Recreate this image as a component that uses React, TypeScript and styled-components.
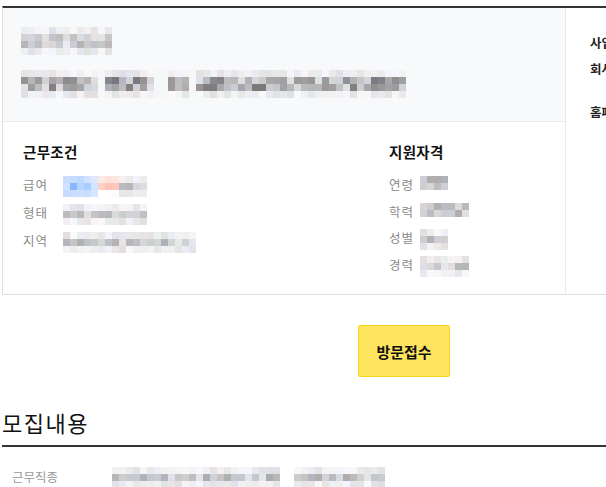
import React from "react";
import styled, { createGlobalStyle } from "styled-components";

const Global = createGlobalStyle`
  html, body { margin: 0; padding: 0; overflow: hidden; background: #fff; }
  body { font-family: "Noto Sans CJK KR", "Noto Sans", sans-serif; color: #222; }
`;

function rng(seed: number) {
  let a = seed >>> 0;
  return () => {
    a = (a + 0x6d2b79f5) >>> 0;
    let t = a;
    t = Math.imul(t ^ (t >>> 15), t | 1);
    t ^= t + Math.imul(t ^ (t >>> 7), t | 61);
    return ((t ^ (t >>> 14)) >>> 0) / 4294967296;
  };
}

const MosaicGrid = styled.div<{ $cols: number; $cell: number }>`
  display: grid;
  grid-template-columns: repeat(${(p) => p.$cols}, ${(p) => p.$cell}px);
  grid-auto-rows: ${(p) => p.$cell}px;
  flex-shrink: 0;
`;

const Cell = styled.span<{ $c: string }>`
  display: block;
  background: ${(p) => p.$c};
`;

type MosaicProps = {
  cols: number;
  rows: number;
  seed: number;
  tint?: (col: number, row: number) => string | null;
  cell?: number;
  light?: boolean;
};

function Mosaic({ cols, rows, seed, tint, cell = 7, light }: MosaicProps) {
  const r = rng(seed);
  const cells: string[] = [];
  for (let y = 0; y < rows; y++) {
    for (let x = 0; x < cols; x++) {
      const t = tint ? tint(x, y) : null;
      if (t) {
        cells.push(t);
        continue;
      }
      const edge = rows >= 3 && (y === 0 || y === rows - 1);
      const lo = edge ? 222 : light ? 175 : rows >= 4 ? 120 : 170;
      const hi = edge ? 248 : light ? 235 : rows >= 4 ? 225 : 232;
      const v = Math.round(lo + r() * (hi - lo));
      const hue = r();
      const rr = v + (hue < 0.33 ? 4 : 0);
      const gg = v + (hue > 0.66 ? 3 : 0);
      const bb = v + (hue > 0.33 && hue < 0.66 ? 8 : 2);
      cells.push(`rgb(${Math.min(rr, 255)},${Math.min(gg, 255)},${Math.min(bb, 255)})`);
    }
  }
  return (
    <MosaicGrid $cols={cols} $cell={cell}>
      {cells.map((c, i) => (
        <Cell key={i} $c={c} />
      ))}
    </MosaicGrid>
  );
}

const Page = styled.div`
  width: 804px;
  padding: 6px 0 0 2px;
`;

const Card = styled.section`
  display: grid;
  grid-template-columns: 563px 1fr;
  border-top: 2px solid #333;
  border-left: 1px solid #e0e0e0;
  border-bottom: 1px solid #e0e0e0;
`;

const Main = styled.div`
  border-right: 1px solid #eaeaea;
  display: flex;
  flex-direction: column;
`;

const Header = styled.div`
  background: #f8f9fa;
  height: 114px;
  box-sizing: border-box;
  border-bottom: 1px solid #ececec;
  padding: 19px 0 0 18px;
  display: flex;
  flex-direction: column;
  gap: 15px;
`;

const Body = styled.div`
  display: grid;
  grid-template-columns: 1fr 176px;
  padding: 19px 0 0 20px;
  height: 172px;
  box-sizing: border-box;
`;

const Col = styled.div`
  display: flex;
  flex-direction: column;
`;

const ColTitle = styled.h3`
  margin: 0 0 13px;
  font-size: 14.5px;
  line-height: 22px;
  font-weight: 700;
  color: #111;
  letter-spacing: 0.3px;
`;

const InfoRow = styled.div<{ $gap: number }>`
  display: flex;
  align-items: flex-start;
  height: ${(p) => p.$gap}px;
`;

const Label = styled.span<{ $w: number }>`
  width: ${(p) => p.$w}px;
  font-size: 12.5px;
  line-height: 17px;
  color: #8a8a8a;
  letter-spacing: 1px;
  flex-shrink: 0;
`;

const Side = styled.aside`
  padding: 26px 0 0 24px;
  display: flex;
  flex-direction: column;
`;

const SideItem = styled.div<{ $mt: number }>`
  margin-top: ${(p) => p.$mt}px;
  font-size: 12.5px;
  line-height: 18px;
  font-weight: 700;
  color: #222;
  white-space: nowrap;
`;

const ButtonWrap = styled.div`
  display: flex;
  justify-content: center;
  margin-top: 30px;
`;

const VisitButton = styled.button`
  width: 92px;
  height: 52px;
  background: #ffe55f;
  border: 1px solid #f9d21c;
  border-radius: 2px;
  font-family: inherit;
  font-size: 15px;
  font-weight: 700;
  color: #111;
  cursor: pointer;
`;

const SectionTitle = styled.h2`
  margin: 30px 0 0;
  padding-bottom: 8px;
  font-size: 22px;
  line-height: 30px;
  font-weight: 400;
  letter-spacing: 1.5px;
  color: #111;
  border-bottom: 2px solid #333;
`;

const DetailRow = styled.div`
  display: flex;
  padding: 20px 0 0 10px;
`;

const DetailLabel = styled.span`
  width: 100px;
  font-size: 12.5px;
  line-height: 20px;
  color: #999;
`;

const salaryTint = (x: number, y: number) => {
  const blue = [
    ["#c8ddff", "#c4dcff", "#bfd8ff", "#cfe3ff", "#dde9fb"],
    ["#cfe2ff", "#8ab8ff", "#b7d4ff", "#a9cdff", "#d2e4ff"],
    ["#c6dcff", "#c8ddff", "#cbe0ff", "#c9ddff", "#d8e7ff"],
  ];
  const pink = [
    ["#fbe9e6", "#ffe0da", "#fde4df"],
    ["#ffd0c6", "#ffc2b5", "#ffc6bb"],
    ["#ffffff", "#ffffff", "#fdfafa"],
  ];
  if (x < 5) return blue[y][x];
  if (x < 8) return pink[y][x - 5];
  return null;
};

export default function App() {
  return (
    <>
      <Global />
      <Page>
        <Card>
          <Main>
            <Header>
              <Mosaic light cols={13} rows={4} seed={11} tint={(x, y) => (y === 0 || y === 3 ? (x % 4 === 3 ? "#f7f7f9" : null) : null)} />
              <Mosaic cols={55} rows={4} seed={29} tint={(x) => (x === 11 || x === 19 || x === 20 || x === 24 ? "#f6f7f9" : null)} />
            </Header>
            <Body>
              <Col>
                <ColTitle>근무조건</ColTitle>
                <InfoRow $gap={28}>
                  <Label $w={40}>급여</Label>
                  <Mosaic cols={12} rows={3} seed={3} tint={salaryTint} />
                </InfoRow>
                <InfoRow $gap={28}>
                  <Label $w={40}>형태</Label>
                  <Mosaic cols={12} rows={3} seed={5} />
                </InfoRow>
                <InfoRow $gap={28}>
                  <Label $w={40}>지역</Label>
                  <Mosaic cols={19} rows={3} seed={7} />
                </InfoRow>
              </Col>
              <Col>
                <ColTitle>지원자격</ColTitle>
                <InfoRow $gap={27}>
                  <Label $w={31}>연령</Label>
                  <Mosaic cols={4} rows={2} seed={13} />
                </InfoRow>
                <InfoRow $gap={26}>
                  <Label $w={31}>학력</Label>
                  <Mosaic cols={7} rows={2} seed={17} />
                </InfoRow>
                <InfoRow $gap={27}>
                  <Label $w={31}>성별</Label>
                  <Mosaic cols={4} rows={3} seed={19} />
                </InfoRow>
                <InfoRow $gap={27}>
                  <Label $w={31}>경력</Label>
                  <Mosaic cols={7} rows={3} seed={23} />
                </InfoRow>
              </Col>
            </Body>
          </Main>
          <Side>
            <SideItem $mt={0}>사업자정보</SideItem>
            <SideItem $mt={8}>회사명</SideItem>
            <SideItem $mt={25}>홈페이지</SideItem>
          </Side>
        </Card>
        <ButtonWrap>
          <VisitButton>방문접수</VisitButton>
        </ButtonWrap>
        <SectionTitle>모집내용</SectionTitle>
        <DetailRow>
          <DetailLabel>근무직종</DetailLabel>
          <Mosaic cols={39} rows={3} seed={31} tint={(x) => (x === 24 || x === 25 ? "#ffffff" : null)} />
        </DetailRow>
      </Page>
    </>
  );
}
